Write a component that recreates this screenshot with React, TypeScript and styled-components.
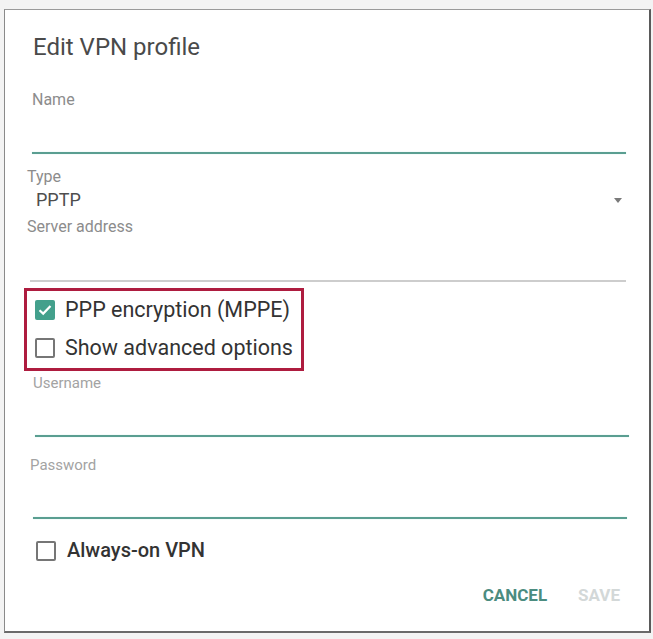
import React from "react";
import styled, { createGlobalStyle } from "styled-components";

const Global = createGlobalStyle`
  html, body { margin: 0; padding: 0; background: #f3f3f3; }
  body { font-family: Roboto, "Noto Sans", Arial, sans-serif; }
  * { box-sizing: border-box; }
`;

const Frame = styled.div`
  margin: 9px 0 0 4px;
  width: 647px;
  background: #fff;
  border-top: 1px solid #9a9a9a;
  border-left: 1px solid #8a8a8a;
  border-right: 2px solid #5a5a5a;
  border-bottom: 2px solid #6a6a6a;
  padding: 0 23px 26px 22px;
  display: flex;
  flex-direction: column;
`;

const Title = styled.h1`
  margin: 23px 0 0 6px;
  font-size: 24px;
  line-height: 28px;
  font-weight: 400;
  color: #4a4a4a;
`;

const Label = styled.div<{ $top: number; $left: number; $light?: boolean; $size?: number }>`
  margin: ${(p) => p.$top}px 0 0 ${(p) => p.$left}px;
  font-size: ${(p) => p.$size ?? 16}px;
  line-height: ${(p) => (p.$size ?? 16) + 3}px;
  color: ${(p) => (p.$light ? "#a3a3a3" : "#8c8c8c")};
`;

const Underline = styled.div<{ $top: number; $left: number; $right: number; $active?: boolean }>`
  margin: ${(p) => p.$top}px ${(p) => p.$right}px 0 ${(p) => p.$left}px;
  height: 2px;
  background: ${(p) => (p.$active ? "#5a9e91" : "#cdcdcd")};
  box-shadow: ${(p) => (p.$active ? "0 0 1px #9fe0d0" : "none")};
`;

const SelectRow = styled.div`
  margin: 3px 4px 0 9px;
  display: flex;
  align-items: center;
  justify-content: space-between;
`;

const SelectValue = styled.span`
  font-size: 18px;
  line-height: 21px;
  color: #4e4e4e;
`;

const Arrow = styled.span`
  width: 0;
  height: 0;
  margin-top: 2px;
  border-left: 4px solid transparent;
  border-right: 4px solid transparent;
  border-top: 5px solid #7a7a7a;
`;

const Highlight = styled.div`
  margin: 6px 0 0 -3px;
  width: 280px;
  border: 3px solid #ae1c3f;
  padding: 6px 0 8px 8px;
  display: flex;
  flex-direction: column;
  gap: 13px;
`;

const CheckRow = styled.label<{ $top?: number; $left?: number; $gap?: number }>`
  display: flex;
  align-items: center;
  gap: ${(p) => p.$gap ?? 10}px;
  margin: ${(p) => p.$top ?? 0}px 0 0 ${(p) => p.$left ?? 0}px;
`;

const Box = styled.span<{ $checked?: boolean }>`
  width: 20px;
  height: 20px;
  border-radius: 2px;
  flex: none;
  display: flex;
  align-items: center;
  justify-content: center;
  background: ${(p) => (p.$checked ? "#43a08c" : "#fff")};
  border: ${(p) => (p.$checked ? "none" : "2px solid #767676")};
`;

const CheckText = styled.span<{ $size: number; $weight?: number }>`
  font-size: ${(p) => p.$size}px;
  line-height: 25px;
  font-weight: ${(p) => p.$weight ?? 400};
  color: #333;
  white-space: nowrap;
`;

const Actions = styled.div`
  margin: 22px 6px 0 0;
  display: flex;
  justify-content: flex-end;
  gap: 31px;
`;

const Action = styled.button<{ $disabled?: boolean }>`
  border: none;
  background: none;
  padding: 0;
  font-family: Roboto, Arial, sans-serif;
  font-size: 17px;
  line-height: 20px;
  font-weight: 700;
  color: ${(p) => (p.$disabled ? "#d3d8d8" : "#4b8c80")};
`;

const Check = () => (
  <svg width="14" height="12" viewBox="0 0 14 12">
    <path d="M1.5 6.2 L5.2 9.6 L12.5 2" fill="none" stroke="#fff" strokeWidth="2.2" />
  </svg>
);

export default function App() {
  return (
    <>
      <Global />
      <Frame>
        <Title>Edit VPN profile</Title>
        <Label $top={29} $left={5}>Name</Label>
        <Underline $top={43} $left={5} $right={0} $active />
        <Label $top={13} $left={0}>Type</Label>
        <SelectRow>
          <SelectValue>PPTP</SelectValue>
          <Arrow />
        </SelectRow>
        <Label $top={7} $left={0}>Server address</Label>
        <Underline $top={44} $left={3} $right={0} />
        <Highlight>
          <CheckRow>
            <Box $checked>
              <Check />
            </Box>
            <CheckText $size={21.5}>PPP encryption (MPPE)</CheckText>
          </CheckRow>
          <CheckRow>
            <Box />
            <CheckText $size={21.5}>Show advanced options</CheckText>
          </CheckRow>
        </Highlight>
        <Label $top={3} $left={6} $light $size={15}>Username</Label>
        <Underline $top={43} $left={8} $right={-3} $active />
        <Label $top={19} $left={3} $light $size={15}>Password</Label>
        <Underline $top={43} $left={6} $right={-1} $active />
        <CheckRow $top={19} $left={9} $gap={11}>
          <Box />
          <CheckText $size={20} $weight={500}>Always-on VPN</CheckText>
        </CheckRow>
        <Actions>
          <Action>CANCEL</Action>
          <Action $disabled>SAVE</Action>
        </Actions>
      </Frame>
    </>
  );
}
